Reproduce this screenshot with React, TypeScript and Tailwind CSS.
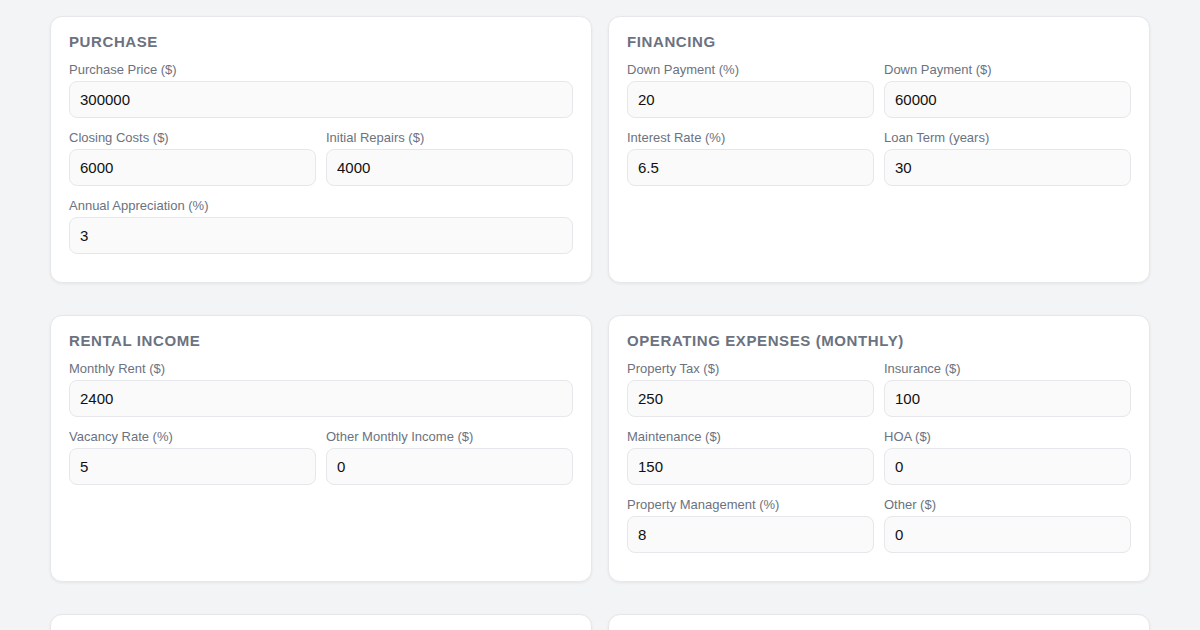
import React from "react";

type Field = { label: string; value: string };
type Section = { title: string; rows: Field[][] };

const sections: Section[] = [
  {
    title: "Purchase",
    rows: [
      [{ label: "Purchase Price ($)", value: "300000" }],
      [
        { label: "Closing Costs ($)", value: "6000" },
        { label: "Initial Repairs ($)", value: "4000" },
      ],
      [{ label: "Annual Appreciation (%)", value: "3" }],
    ],
  },
  {
    title: "Financing",
    rows: [
      [
        { label: "Down Payment (%)", value: "20" },
        { label: "Down Payment ($)", value: "60000" },
      ],
      [
        { label: "Interest Rate (%)", value: "6.5" },
        { label: "Loan Term (years)", value: "30" },
      ],
    ],
  },
  {
    title: "Rental Income",
    rows: [
      [{ label: "Monthly Rent ($)", value: "2400" }],
      [
        { label: "Vacancy Rate (%)", value: "5" },
        { label: "Other Monthly Income ($)", value: "0" },
      ],
    ],
  },
  {
    title: "Operating Expenses (Monthly)",
    rows: [
      [
        { label: "Property Tax ($)", value: "250" },
        { label: "Insurance ($)", value: "100" },
      ],
      [
        { label: "Maintenance ($)", value: "150" },
        { label: "HOA ($)", value: "0" },
      ],
      [
        { label: "Property Management (%)", value: "8" },
        { label: "Other ($)", value: "0" },
      ],
    ],
  },
  {
    title: "Cash Flow",
    rows: [
      [
        { label: "Monthly Cash Flow ($)", value: "412" },
        { label: "Annual Cash Flow ($)", value: "4944" },
      ],
    ],
  },
  {
    title: "Returns",
    rows: [
      [
        { label: "Cap Rate (%)", value: "7.1" },
        { label: "Cash on Cash (%)", value: "7.0" },
      ],
    ],
  },
];

function Input({ label, value }: Field) {
  return (
    <label className="mb-[12px] block min-w-0">
      <span className="mb-[3px] block text-[13px] leading-[16px] text-[#6b7280]">{label}</span>
      <input
        defaultValue={value}
        className="block h-[37px] w-full rounded-lg border border-[#e5e7eb] bg-[#fafafa] px-[10px] text-[15px] text-[#111111] outline-none"
      />
    </label>
  );
}

function Card({ title, rows }: Section) {
  return (
    <section className="rounded-xl border border-[#e5e7eb] bg-white px-[18px] pb-[16px] pt-[16px] shadow-[0_1px_3px_rgba(0,0,0,0.06)]">
      <h2 className="mb-[11px] text-[15px] font-bold uppercase leading-[18px] tracking-[0.6px] text-[#6b7280]">
        {title}
      </h2>
      {rows.map((row, i) =>
        row.length === 1 ? (
          <Input key={i} {...row[0]} />
        ) : (
          <div key={i} className="grid grid-cols-2 gap-x-[10px]">
            {row.map((f) => (
              <Input key={f.label} {...f} />
            ))}
          </div>
        ),
      )}
    </section>
  );
}

export default function App() {
  return (
    <div className="min-h-screen bg-[#f3f4f6] pt-4 font-['Liberation_Sans',Arial,sans-serif]">
      <div className="mx-auto grid w-[1100px] grid-cols-2 gap-x-4 gap-y-8">
        {sections.map((s) => (
          <Card key={s.title} {...s} />
        ))}
      </div>
    </div>
  );
}
